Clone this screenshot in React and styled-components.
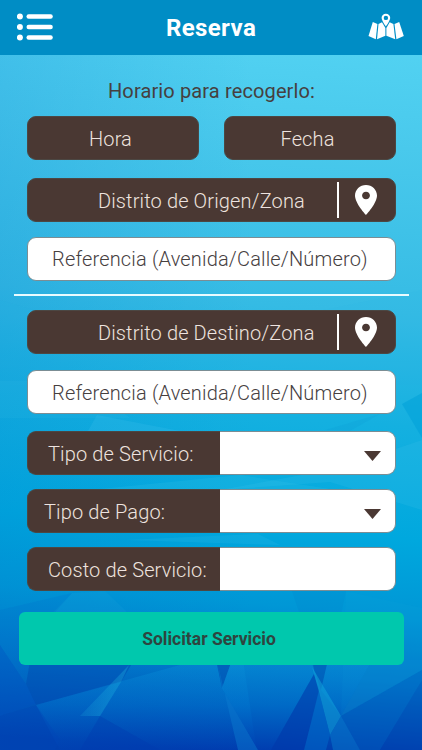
import styled, { createGlobalStyle } from 'styled-components';

const GlobalStyle = createGlobalStyle`
  * {
    box-sizing: border-box;
  }
  body {
    margin: 0;
    background: #0038a8;
  }
`;

const Screen = styled.div`
  position: relative;
  width: 422px;
  height: 750px;
  overflow: hidden;
  font-family: Roboto, 'Liberation Sans', sans-serif;
  color: #46403f;
`;

const Backdrop = styled.svg`
  position: absolute;
  inset: 0;
  z-index: 0;
`;

const Content = styled.div`
  position: relative;
  z-index: 1;
  display: flex;
  flex-direction: column;
`;

const Header = styled.header`
  display: flex;
  justify-content: space-between;
  align-items: center;
  height: 55px;
  padding: 0 18px 2px 17px;
  background: #008dc5;
`;

const Title = styled.h1`
  margin: 3px 0 0;
  font-size: 24px;
  line-height: 28px;
  font-weight: 700;
  letter-spacing: 0.4px;
  color: white;
`;

const Form = styled.main`
  display: flex;
  flex-direction: column;
  padding: 22px 26px 0 27px;
`;

const Heading = styled.h2`
  margin: 0 0 11px;
  font-size: 20px;
  line-height: 28px;
  font-weight: 400;
  text-align: center;
`;

const Text = styled.span`
  white-space: nowrap;
  letter-spacing: ${({ $spacing }) => $spacing ?? 0.13}px;
`;

const Pair = styled.div`
  display: grid;
  grid-template-columns: 1fr 1fr;
  gap: 25px;
  margin-bottom: 18px;
`;

const PickerButton = styled.button`
  height: 44px;
  padding: 2px 5px 0 0;
  border: 1px solid #4c4743;
  border-radius: 9px;
  background: #4a3833;
  color: #eee3df;
  font: 300 20px Roboto, sans-serif;
`;

const District = styled.div`
  display: flex;
  align-items: center;
  height: 44px;
  margin-bottom: ${({ $gap }) => $gap}px;
  padding: 0 18px 0 70px;
  border: 1px solid #4c4743;
  border-radius: 9px;
  background: #4a3833;
  color: #eee3df;
  font-size: 20px;
  font-weight: 300;
`;

const DistrictLabel = styled.div`
  padding-top: 2px;
`;

const PinArea = styled.div`
  display: flex;
  align-items: center;
  height: 36px;
  margin-left: auto;
  padding-left: 16px;
  border-left: 2px solid #fff;
`;

const Reference = styled.div`
  display: flex;
  align-items: center;
  height: 44px;
  padding: ${({ $drop }) => $drop || 0}px 0 0 24px;
  border: 1px solid #7b8d94;
  border-radius: 9px;
  background: white;
  font-size: 20px;
  font-weight: 300;
`;

const Separator = styled.hr`
  width: 395px;
  height: 2px;
  margin: 13px 0 14px -13px;
  border: 0;
  background: #e8fbff;
`;

const Field = styled.div`
  display: flex;
  height: 44px;
  margin-top: ${({ $gap }) => $gap}px;
`;

const FieldLabel = styled.div`
  display: flex;
  align-items: center;
  width: 193px;
  padding: 2px 0 0 ${({ $indent }) => $indent}px;
  border: 1px solid #4c4743;
  border-right: 0;
  border-radius: 9px 0 0 9px;
  background: #4a3833;
  color: #eee3df;
  font-size: 20px;
  font-weight: 300;
`;

const FieldValue = styled.div`
  flex: 1;
  display: flex;
  align-items: center;
  justify-content: flex-end;
  padding: 5px 14px 0 0;
  border: 1px solid #7b8d94;
  border-left: 0;
  border-radius: 0 9px 9px 0;
  background: white;
`;

const Submit = styled.button`
  height: 53px;
  margin: 21px -8px 0;
  padding: 0 5px 0 0;
  border: 0;
  border-radius: 6px;
  background: #00c8ad;
  color: #2e4540;
  font: 700 17.5px Roboto, sans-serif;
`;

const shards = [
  { points: '0,300 150,345 422,290 422,385 0,385', fill: '#20b8e8', o: 0.08 },
  { points: '402,404 422,393 422,438', fill: '#00a0d8', o: 0.55 },
  { points: '0,381 80,381 130,418 0,418', fill: '#45c4ee', o: 0.1 },
  { points: '97,415 88,431 180,431', fill: '#45c4ee', o: 0.2 },
  { points: '325,430 380,414 350,431', fill: '#078fcc', o: 0.12 },
  { points: '220,490 340,468 422,440 422,510 330,482', fill: '#4bcaec', o: 0.16 },
  { points: '100,489 240,475 330,489', fill: '#4bcaec', o: 0.14 },
  { points: '125,540 280,545 258,534', fill: '#4bcaec', o: 0.13 },
  { points: '72,593 105,591 130,615 50,615', fill: '#26aee2', o: 0.12 },
  { points: '0,610 72,593 34,636 26,684 0,645', fill: '#0064c4', o: 0.16 },
  { points: '292,591 346,591 341,615 300,615', fill: '#0068b8', o: 0.1 },
  { points: '346,591 422,608 422,670 341,716', fill: '#10a2dc', o: 0.14 },
  { points: '0,645 26,684 36,704 0,716', fill: '#004fc0', o: 0.4 },
  { points: '32,650 140,650 121,682 36,705 26,684', fill: '#0047b0', o: 0.45 },
  { points: '36,705 180,665 240,640 256,746 258,750 60,750', fill: 'url(#lit)', o: 0.4 },
  { points: '0,716 36,705 60,740 55,750 0,750', fill: '#0046b8', o: 0.35 },
  { points: '129,665 121,682 100,716 80,716', fill: 'url(#streak)', o: 0.34 },
  { points: '100,716 80,750 160,750', fill: '#003aae', o: 0.35 },
  { points: '216,660 232,660 222,688', fill: '#003ca6', o: 0.45 },
  { points: '222,688 218,665 238,750 258,750', fill: '#0a7cd0', o: 0.45 },
  { points: '222,688 232,660 314,660 314,674 271,750 258,750', fill: 'url(#lit)', o: 0.45 },
  { points: '314,674 271,750 304,750 319,690', fill: '#0038ac', o: 0.5 },
  { points: '311,660 328,660 321,690', fill: '#004aaf', o: 0.42 },
  { points: '328,660 372,660 341,716 321,690', fill: 'url(#lit)', o: 0.5 },
  { points: '312,667 341,716 330,735 319,692', fill: '#12a8dc', o: 0.5 },
  { points: '319,692 304,750 326,750 330,735', fill: '#006bcb', o: 0.5 },
  { points: '341,716 422,670 422,680 380,750 360,750', fill: '#0063c4', o: 0.35 },
  { points: '341,716 372,660 422,660 422,670', fill: '#0a8dd3', o: 0.25 },
  { points: '422,680 380,750 422,750', fill: '#0040b0', o: 0.3 },
  { points: '330,735 341,716 360,750 333,750', fill: '#0a86d4', o: 0.4 },
];

function FacetedBackdrop() {
  return (
    <Backdrop width="422" height="750" viewBox="0 0 422 750" aria-hidden="true">
      <defs>
        <linearGradient id="sky" x1="0.52" y1="0" x2="0.48" y2="1">
          <stop offset="0" stopColor="#55d5f4" />
          <stop offset="0.18" stopColor="#49c9ec" />
          <stop offset="0.4" stopColor="#35bbe4" />
          <stop offset="0.55" stopColor="#14b0e0" />
          <stop offset="0.7" stopColor="#00a8de" />
          <stop offset="0.8" stopColor="#0097d6" />
          <stop offset="0.89" stopColor="#0077ca" />
          <stop offset="1" stopColor="#0038ab" />
        </linearGradient>
        <linearGradient id="shade" x1="0" y1="0" x2="1" y2="0">
          <stop offset="0" stopColor="#0078cc" stopOpacity="0.18" />
          <stop offset="0.6" stopColor="#0078cc" stopOpacity="0" />
        </linearGradient>
        <linearGradient id="lit" gradientUnits="userSpaceOnUse" x1="0" y1="660" x2="0" y2="750">
          <stop offset="0" stopColor="#0a92d8" />
          <stop offset="0.5" stopColor="#0078d0" />
          <stop offset="1" stopColor="#0040b4" />
        </linearGradient>
        <linearGradient id="streak" gradientUnits="userSpaceOnUse" x1="80" y1="690" x2="108" y2="704">
          <stop offset="0" stopColor="#1cb1df" stopOpacity="0.2" />
          <stop offset="1" stopColor="#1cb1df" />
        </linearGradient>
      </defs>
      <rect width="422" height="750" fill="url(#sky)" />
      <rect width="422" height="750" fill="url(#shade)" />
      {shards.map((s) => (
        <polygon key={s.points} points={s.points} fill={s.fill} opacity={s.o} />
      ))}
    </Backdrop>
  );
}

function MenuIcon() {
  return (
    <svg width="37" height="28" viewBox="0 0 37 28" fill="white">
      {[3.5, 14, 24.5].map((y) => (
        <g key={y}>
          <circle cx="2.9" cy={y} r="3" />
          <rect x="9.5" y={y - 2.2} width="26.3" height="4.4" rx="2.2" />
        </g>
      ))}
    </svg>
  );
}

function MapIcon() {
  return (
    <svg width="36" height="27" viewBox="0 0 36 27" fill="white">
      <path d="M4.8 9 9.4 11 7.8 26.3 .5 23z" />
      <path d="M10.5 11 14 9.2 17.4 15V22.7L9 26.3z" />
      <path d="M18.4 15 21.7 9.2 25.4 11 27.2 26.3 18.4 22.7z" />
      <path d="M26.5 11 31.2 9 35.8 23 28.4 26.3z" />
      <path
        fillRule="evenodd"
        d="M17.9.7c-2.5 0-4.3 1.8-4.3 4.1 0 3 4.3 8.6 4.3 8.6s4.3-5.6 4.3-8.6c0-2.3-1.8-4.1-4.3-4.1zm0 2a2.2 2.2 0 1 1 0 4.4 2.2 2.2 0 0 1 0-4.4z"
      />
    </svg>
  );
}

function PinIcon() {
  return (
    <svg width="22" height="30" viewBox="5 2 14 20" preserveAspectRatio="none" fill="white">
      <path d="M12 2C8.13 2 5 5.13 5 9c0 5.25 7 13 7 13s7-7.75 7-13c0-3.87-3.13-7-7-7zm0 9.5c-1.38 0-2.5-1.12-2.5-2.5s1.12-2.5 2.5-2.5 2.5 1.12 2.5 2.5-1.12 2.5-2.5 2.5z" />
    </svg>
  );
}

function Caret() {
  return (
    <svg width="17" height="10" viewBox="0 0 17 10" fill="#4a3833">
      <path d="M0 0H17L8.5 10z" />
    </svg>
  );
}

function DistrictRow({ label, gap }) {
  return (
    <District $gap={gap}>
      <DistrictLabel>
        <Text>{label}</Text>
      </DistrictLabel>
      <PinArea>
        <PinIcon />
      </PinArea>
    </District>
  );
}

function FieldRow({ label, indent, gap, select }) {
  return (
    <Field $gap={gap}>
      <FieldLabel $indent={indent}>
        <Text>{label}</Text>
      </FieldLabel>
      <FieldValue>{select && <Caret />}</FieldValue>
    </Field>
  );
}

function App() {
  return (
    <Screen>
      <GlobalStyle />
      <FacetedBackdrop />
      <Content>
        <Header>
          <MenuIcon />
          <Title>Reserva</Title>
          <MapIcon />
        </Header>
        <Form>
          <Heading>
            <Text>Horario para recogerlo:</Text>
          </Heading>
          <Pair>
            <PickerButton>
              <Text>Hora</Text>
            </PickerButton>
            <PickerButton>
              <Text>Fecha</Text>
            </PickerButton>
          </Pair>
          <DistrictRow label="Distrito de Origen/Zona" gap={15} />
          <Reference>
            <Text $spacing={0.17}>Referencia (Avenida/Calle/Número)</Text>
          </Reference>
          <Separator />
          <DistrictRow label="Distrito de Destino/Zona" gap={16} />
          <Reference $drop={2}>
            <Text $spacing={0.17}>Referencia (Avenida/Calle/Número)</Text>
          </Reference>
          <FieldRow label="Tipo de Servicio:" indent={20} gap={17} select />
          <FieldRow label="Tipo de Pago:" indent={16} gap={14} select />
          <FieldRow label="Costo de Servicio:" indent={20} gap={14} />
          <Submit>
            <Text $spacing={0}>Solicitar Servicio</Text>
          </Submit>
        </Form>
      </Content>
    </Screen>
  );
}

export default App;
